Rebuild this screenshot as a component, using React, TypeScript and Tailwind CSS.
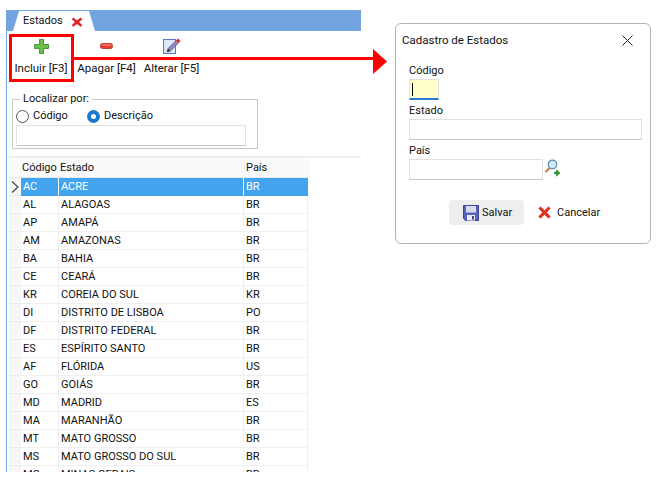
const estados = [
  ["AC", "ACRE", "BR"],
  ["AL", "ALAGOAS", "BR"],
  ["AP", "AMAPÁ", "BR"],
  ["AM", "AMAZONAS", "BR"],
  ["BA", "BAHIA", "BR"],
  ["CE", "CEARÁ", "BR"],
  ["KR", "COREIA DO SUL", "KR"],
  ["DI", "DISTRITO DE LISBOA", "PO"],
  ["DF", "DISTRITO FEDERAL", "BR"],
  ["ES", "ESPÍRITO SANTO", "BR"],
  ["AF", "FLÓRIDA", "US"],
  ["GO", "GOIÁS", "BR"],
  ["MD", "MADRID", "ES"],
  ["MA", "MARANHÃO", "BR"],
  ["MT", "MATO GROSSO", "BR"],
  ["MS", "MATO GROSSO DO SUL", "BR"],
  ["MG", "MINAS GERAIS", "BR"],
];

function IconClose() {
  return (
    <svg width="12" height="12" viewBox="0 0 13 13">
      <path d="M2.5 2 L6.5 5 L10.5 2 L12 3.5 L8.5 6.5 L12 10 L10.5 11.5 L6.5 8.5 L2.5 11.5 L1 10 L4.5 6.5 L1 3.5 Z" fill="#e8202a" stroke="#b8333a" strokeWidth="0.5" />
    </svg>
  );
}

function IconPlus() {
  return (
    <svg width="15" height="15" viewBox="0 0 15 15">
      <path d="M5.5 0.5 H9.5 V5.5 H14.5 V9.5 H9.5 V14.5 H5.5 V9.5 H0.5 V5.5 H5.5 Z" fill="#6cc04a" stroke="#4b9440" strokeWidth="1" />
    </svg>
  );
}

function IconMinus() {
  return (
    <svg width="13" height="6" viewBox="0 0 13 6">
      <rect x="0.5" y="0.5" width="12" height="5" rx="2" fill="#e8392c" stroke="#c8402c" strokeWidth="1" />
      <rect x="2" y="1.5" width="9" height="1" fill="#f7a08c" />
    </svg>
  );
}

function IconEdit() {
  return (
    <svg width="18" height="16" viewBox="0 0 18 16">
      <rect x="0.5" y="1.5" width="12" height="14" fill="#dfe8f8" stroke="#5a78c0" strokeWidth="1" />
      <path d="M4 14 L5 10.5 L13 2.5 L15.5 5 L7.5 13 Z" fill="#8a84c8" stroke="#56507a" strokeWidth="0.6" />
      <path d="M4 14 L5 10.5 L7.5 13 Z" fill="#4a3a20" />
      <path d="M13 2.5 L15 0.5 L17.5 3 L15.5 5 Z" fill="#d83020" />
    </svg>
  );
}

function IconSearch() {
  return (
    <svg width="15" height="18" viewBox="0 0 15 18">
      <path d="M1 12.5 L5 8.5" stroke="#c87a30" strokeWidth="2" strokeLinecap="round" />
      <circle cx="7.5" cy="5.5" r="4.3" fill="#cfeafa" stroke="#5a8aa8" strokeWidth="1.2" />
      <path d="M9.5 13 L11.5 13 L11.5 10.8 L15 14 L11.5 17.2 L11.5 15 L9.5 15 Z" fill="#2fa02f" stroke="#1a6a1a" strokeWidth="0.5" />
    </svg>
  );
}

function IconSave() {
  return (
    <svg width="16" height="16" viewBox="0 0 16 16">
      <path d="M0.5 0.5 H15.5 V15.5 H2.5 L0.5 13.5 Z" fill="#5a62c0" stroke="#3f4698" strokeWidth="1" />
      <rect x="3" y="1" width="10" height="6.5" fill="#d8dce8" />
      <rect x="4" y="10" width="8" height="5.5" fill="#eceef4" />
      <rect x="9" y="11" width="2" height="3.5" fill="#3f4698" />
    </svg>
  );
}

function IconCancel() {
  return (
    <svg width="13" height="13" viewBox="0 0 13 13">
      <path d="M2.5 0.8 L6.5 4.5 L10.5 0.8 L12.3 2.5 L8.5 6.5 L12.3 10.5 L10.5 12.3 L6.5 8.5 L2.5 12.3 L0.7 10.5 L4.5 6.5 L0.7 2.5 Z" fill="#e8301c" stroke="#b8281c" strokeWidth="0.5" />
    </svg>
  );
}

function ToolButton({ icon, label, className }: { icon: React.ReactNode; label: string; className: string }) {
  return (
    <div className={`flex flex-col items-center ${className}`}>
      <div className="h-[18px] flex items-center justify-center">{icon}</div>
      <span className="mt-[5px] leading-[16px] text-[11.5px] whitespace-nowrap">{label}</span>
    </div>
  );
}

export default function App() {
  return (
    <div className="relative w-[670px] h-[498px] bg-white overflow-hidden flex items-start text-[11px] text-[#111] font-['Roboto',sans-serif]">
      {/* Tela de estados */}
      <div className="ml-[6px] mt-[10px] w-[355px] h-[462px] flex flex-col overflow-hidden">
        <div className="h-[21px] bg-[#72a5e0] pl-[7px] flex items-end shrink-0">
          <div className="w-[82px] h-[20px] bg-white [clip-path:polygon(6px_0,76px_0,82px_100%,0_100%)] pl-[10px] pt-px flex items-center gap-[8px]">
            <span>Estados</span>
            <IconClose />
          </div>
        </div>

        <div className="flex-1 min-h-0 border-l border-[#72a5e0] flex flex-col">
          <div className="h-[52px] pt-[6px] flex shrink-0">
            <ToolButton icon={<IconPlus />} label="Incluir [F3]" className="w-[52px] ml-[8px]" />
            <ToolButton icon={<IconMinus />} label="Apagar [F4]" className="w-[57px] ml-[11px]" />
            <ToolButton icon={<IconEdit />} label="Alterar [F5]" className="w-[55px] ml-[9px]" />
          </div>

          {/* Localizar por */}
          <fieldset className="ml-[5px] mt-[10px] w-[246px] h-[56px] border border-[#c8c8c8] px-[3px] shrink-0">
            <legend className="ml-[4px] px-[3px] leading-[12px]">Localizar por:</legend>
            <div className="h-[18px] mt-[2px] flex items-center">
              <span className="w-[13px] h-[13px] rounded-full border border-[#555] bg-white" />
              <span className="ml-[4px] w-[54px]">Código</span>
              <span className="w-[13px] h-[13px] rounded-full border-[4px] border-[#1e78d0] bg-white" />
              <span className="ml-[4px]">Descrição</span>
            </div>
            <div className="h-[21px] w-[230px] border border-[#e2e2e2] border-b-[#c8c8c8] bg-white" />
          </fieldset>

          <div className="mt-[7px] h-[2px] bg-[#eeeeee] shrink-0" />

          {/* Grade */}
          <div className="w-[301px] ml-[2px] mt-px flex-1 min-h-0 overflow-hidden">
            <div className="grid grid-cols-[12px_38px_185px_64px] h-[19px] bg-[#fafafa] border-b border-[#e8e8e8] leading-[18px]">
              <span />
              <span className="pl-px">Código</span>
              <span className="pl-px">Estado</span>
              <span className="pl-[1px] border-l border-[#eeeeee]">País</span>
            </div>
            {estados.map((e, i) => (
              <div key={e[0]} className={`grid grid-cols-[12px_38px_185px_64px] h-[18px] leading-[17px] ${i === 0 ? "text-white" : ""}`}>
                <span className="bg-[#f7f7f7] border-b border-[#ececec] flex items-center justify-center">
                  {i === 0 && (
                    <svg width="8" height="12" viewBox="0 0 8 12">
                      <path d="M1 0.5 L7 6 L1 11.5" fill="none" stroke="#444" strokeWidth="1.2" />
                    </svg>
                  )}
                </span>
                <span className={`pl-[2px] border-b border-r ${i === 0 ? "bg-[#42a4ee] border-[#42a4ee] border-r-white" : "border-[#f0f0f0]"}`}>{e[0]}</span>
                <span className={`pl-[2px] border-b border-r ${i === 0 ? "bg-[#42a4ee] border-[#42a4ee] border-r-white" : "border-[#f0f0f0]"}`}>{e[1]}</span>
                <span className={`pl-[2px] border-b border-r ${i === 0 ? "bg-[#42a4ee] border-[#42a4ee]" : "border-[#f0f0f0]"}`}>{e[2]}</span>
              </div>
            ))}
          </div>
        </div>
      </div>

      {/* Cadastro de Estados */}
      <div className="ml-[34px] mt-[23px] w-[256px] h-[221px] border border-[#b4b4b4] rounded-[6px] bg-white flex flex-col shrink-0">
        <div className="h-[32px] pl-[6px] pr-[17px] flex items-center justify-between">
          <span className="text-[11.5px] pt-[2px]">Cadastro de Estados</span>
          <svg width="11" height="11" viewBox="0 0 11 11">
            <path d="M0.5 0.5 L10.5 10.5 M10.5 0.5 L0.5 10.5" stroke="#222" strokeWidth="1" />
          </svg>
        </div>
        <div className="pl-[13px] flex flex-col">
          <span className="mt-[7px] leading-[16px]">Código</span>
          <div className="w-[30px] h-[21px] bg-[#ffffcc] border border-[#e0e0e0] border-b-2 border-b-[#2a78d8] flex items-center pl-[2px]">
            <span className="w-px h-[13px] bg-black" />
          </div>
          <span className="mt-[3px] leading-[16px]">Estado</span>
          <div className="w-[233px] h-[21px] border border-[#e0e0e0] border-b-[#c8c8c8]" />
          <span className="mt-[3px] leading-[16px]">País</span>
          <div className="flex items-start gap-[2px]">
            <div className="w-[134px] h-[21px] border border-[#e0e0e0] border-b-[#c8c8c8]" />
            <IconSearch />
          </div>
        </div>
        <div className="mt-[20px] ml-[53px] flex items-center">
          <div className="w-[75px] h-[25px] rounded-[4px] bg-[#eeeeee] pl-[14px] flex items-center gap-[3px]">
            <IconSave />
            <span className="pt-[2px]">Salvar</span>
          </div>
          <div className="ml-[14px] flex items-center gap-[6px]">
            <IconCancel />
            <span className="pt-[2px]">Cancelar</span>
          </div>
        </div>
      </div>

      {/* Marcação vermelha sobre a tela */}
      <div className="absolute left-[9px] top-[34px] w-[65px] h-[48px] border-[3px] border-[#ff0000]" />
      <div className="absolute left-[72px] top-[57px] w-[302px] h-[3px] bg-[#ff0000]" />
      <div className="absolute left-[373px] top-[49px] w-[14px] h-[25px] bg-[#ff0000] [clip-path:polygon(0_0,100%_50%,0_100%)]" />
    </div>
  );
}
